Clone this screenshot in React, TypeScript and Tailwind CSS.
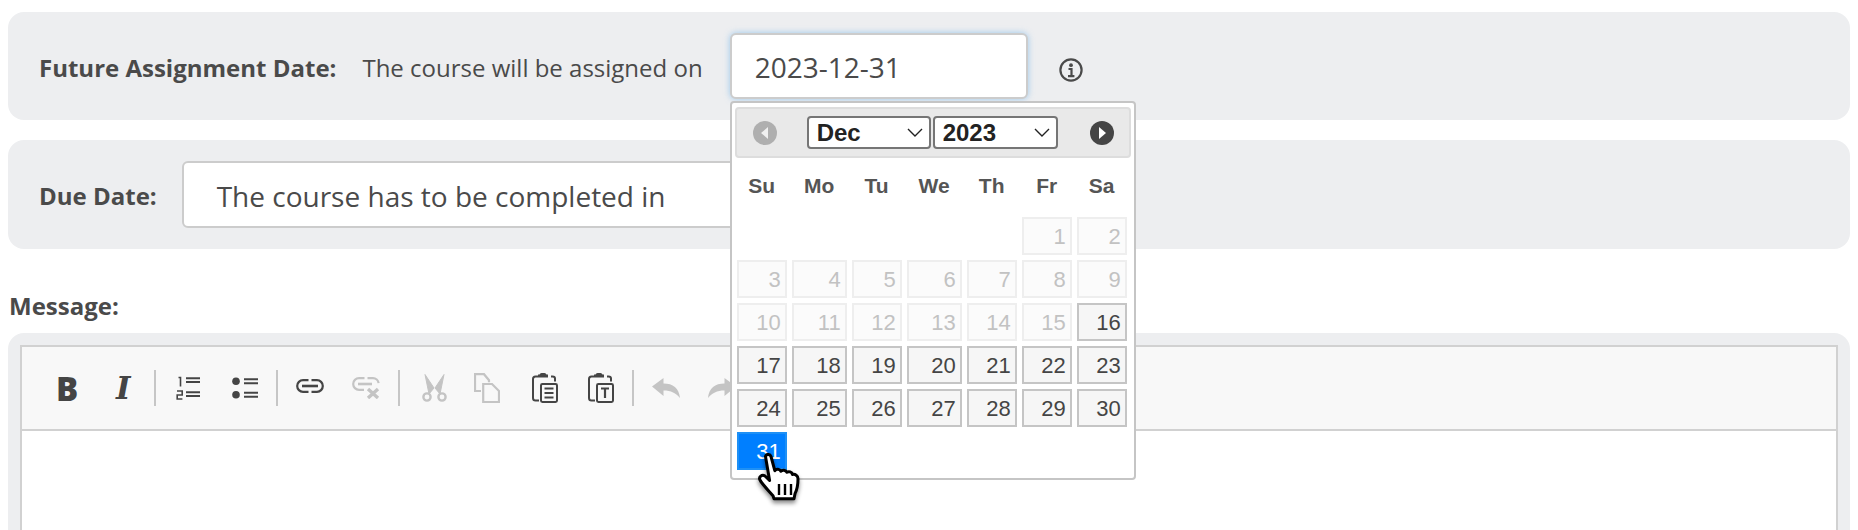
import React from "react";

const ACTIVE = "#454545";
const MUTED = "#c4c4c4";

const WEEKDAYS = ["Su", "Mo", "Tu", "We", "Th", "Fr", "Sa"];
const DAYS: (number | null)[] = [
  null, null, null, null, null,
  ...Array.from({ length: 31 }, (_, i) => i + 1),
];

const Separator = ({ ml }: { ml: string }) => (
  <div className={`h-[36px] w-[2px] bg-[#c6c6c6] ${ml}`} />
);

const NumberedIcon = () => (
  <svg width="24" height="24" viewBox="0 0 24 24" className="ml-[20px]" fill="none" stroke={ACTIVE}>
    <path d="M2.5 1.500h2v9" strokeWidth="1.6" />
    <path d="M10 2.200h14M10 6h14M10 16.200h14M10 20h14" strokeWidth="2" />
    <path d="M1 15h5.200v4H1.200v4H6.400" strokeWidth="1.6" />
  </svg>
);

const BulletIcon = () => (
  <svg width="26" height="22" viewBox="0 0 26 22" className="ml-[32px]" fill={ACTIVE} stroke={ACTIVE}>
    <circle cx="4" cy="4.200" r="3.800" stroke="none" />
    <circle cx="4" cy="17.800" r="3.800" stroke="none" />
    <path d="M12 2.200h14M12 6.200h14M12 15.800h14M12 19.800h14" strokeWidth="2" fill="none" />
  </svg>
);

const LinkIcon = () => (
  <svg width="28" height="14" viewBox="0 0 28 14" className="ml-[18px] -mt-[4px]" fill="none" stroke={ACTIVE} strokeWidth="2.200">
    <path d="M12.500 1.200H7a5.800 5.800 0 0 0 0 11.600h5.500" />
    <path d="M15.500 1.200H21a5.800 5.800 0 0 1 0 11.600h-5.500" />
    <path d="M6 7h16" strokeWidth="2.600" />
  </svg>
);

const UnlinkIcon = () => (
  <svg width="28" height="22" viewBox="0 0 28 22" className="ml-[28px]" fill="none" stroke={MUTED} strokeWidth="2.200">
    <path d="M12.500 1.200H7a5.800 5.800 0 0 0 0 11.600h5" />
    <path d="M15.500 1.200H21a5.800 5.800 0 0 1 5.600 5" />
    <path d="M6 7h14" strokeWidth="2.600" />
    <path d="M16 12l10 9M26 12l-10 9" strokeWidth="3.400" />
  </svg>
);

const CutIcon = () => (
  <svg width="25" height="28" viewBox="0 0 25 28" className="ml-[22px]" fill="none" stroke={MUTED}>
    <circle cx="5" cy="23" r="3.600" strokeWidth="2.400" />
    <circle cx="20" cy="23" r="3.600" strokeWidth="2.400" />
    <path d="M7 20L3 .5l9 13.500zM18 20L22 .5l-9 13.500z" fill={MUTED} strokeWidth="1" />
  </svg>
);

const CopyIcon = () => (
  <svg width="26" height="30" viewBox="0 0 26 30" className="ml-[27px]" fill="none" stroke={MUTED} strokeWidth="2.200">
    <path d="M7 18H1V1.200h9l5 6v2" />
    <path d="M9.200 11h8.800l7 7v11H9.200z" />
  </svg>
);

const PasteIcon = ({ text, ml }: { text?: boolean; ml: string }) => (
  <svg width="26" height="30" viewBox="0 0 26 30" className={ml} fill="none" stroke={ACTIVE} strokeWidth="2">
    <path d="M6 3.500H3.500Q1 3.500 1 6v19q0 2.500 2.500 2.500H7" />
    <path d="M19 3.500h1.500Q23 3.500 23 5.500v3" />
    <path d="M7.500 1.500Q8 0 9.500 0h3q1.500 0 2 1.500H16v3H6v-3z" fill={ACTIVE} stroke="none" />
    <rect x="9" y="11" width="16" height="18" rx="1.400" />
    {text ? (
      <path d="M13 15.500h8M17 15.500v9.500" strokeWidth="2.200" />
    ) : (
      <path d="M12.500 15.500h9M12.500 20h9M12.500 24.500h9" strokeWidth="2" />
    )}
  </svg>
);

const UndoIcon = ({ ml, flip }: { ml: string; flip?: boolean }) => (
  <svg width="28" height="20" viewBox="0 0 28 20" className={`${ml} ${flip ? "-scale-x-100" : ""}`} fill={MUTED}>
    <path d="M0 8.500L11.500 0v5.500C21 5.500 27 10 28 20 24 15 19 12.500 11.500 12.500V18z" />
  </svg>
);

const InfoIcon = () => (
  <svg width="24" height="24" viewBox="0 0 24 24" className="ml-[31px] mt-[8px]" fill="none" stroke="#4a4a4a">
    <circle cx="12" cy="12" r="10.600" strokeWidth="2.200" />
    <circle cx="12" cy="7.200" r="1.900" fill="#4a4a4a" stroke="none" />
    <path d="M9.500 11h3v7M9 18.200h6.400" strokeWidth="2.200" />
  </svg>
);

const NavButton = ({ next }: { next?: boolean }) => (
  <svg width="26" height="26" viewBox="0 0 26 26" className={next ? "" : "opacity-35"}>
    <circle cx="13" cy="13" r="12" fill="#454545" />
    {next ? <path d="M10 7l7 6-7 6z" fill="#fff" /> : <path d="M16 7l-7 6 7 6z" fill="#fff" />}
  </svg>
);

const HandCursor = () => (
  <svg
    width="46"
    height="50"
    viewBox="0 0 46 50"
    className="absolute left-[26px] top-[350px] drop-shadow-[0_3px_2px_rgba(0,0,0,0.45)]"
  >
    <path
      d="M7.500 3.500C8 .8 12 .8 13 3.500l3.800 14.200c1.500-2.200 5-2 6 .6 1.500-1.800 5-1.500 6 1 2-1.200 5-.5 5.700 2.200 2.600-.6 5.500 1 5.500 4.200 0 6-1 11-3 15l-1 5H16l-1-3C10 37 4 31 2 27c-1.600-3 2-6 5-4l4.600 4.500z"
      fill="#fff"
      stroke="#000"
      strokeWidth="3"
      strokeLinejoin="round"
    />
    <path d="M21 31v11M27 31v11M33 31v11" stroke="#000" strokeWidth="2.400" />
  </svg>
);

const DayCell = ({ day }: { day: number }) => {
  const selected = day === 31;
  const disabled = day < 16;
  return (
    <div
      className={`flex items-center justify-end pr-[4px] h-[38px] border-2 text-[22px] ${
        selected
          ? "border-[#1e90f5] bg-[#007fff] text-white"
          : disabled
            ? "border-[#eeeeee] bg-[#fbfbfb] text-[#c2c2c2]"
            : "border-[#c5c5c5] bg-[#f6f6f6] text-[#454545]"
      }`}
    >
      {day}
    </div>
  );
};

const MonthSelect = ({ value, className }: { value: string; className: string }) => (
  <div className={`relative h-[33px] ${className}`}>
    <select
      defaultValue={value}
      className="w-full h-full appearance-none bg-white border-2 border-[#767676] rounded-[4px] pl-[8px] text-[24px] leading-none font-bold text-[#222222] outline-none"
    >
      <option>{value}</option>
    </select>
    <svg width="16" height="9" viewBox="0 0 16 9" className="absolute right-[8px] top-[12px]" fill="none" stroke="#222" strokeWidth="1.400">
      <path d="M1 1l7 7 7-7" />
    </svg>
  </div>
);

const DatePicker = () => (
  <div className="absolute left-0 top-[68px] z-10 w-[406px] h-[379px] bg-white border-2 border-[#c5c5c5] rounded-[4px] px-[3px] pt-[4px] font-['Liberation_Sans',sans-serif]">
    <div className="relative flex items-center justify-between h-[51px] pl-[15px] pr-[14px] bg-[#e9e9e9] border-2 border-[#dddddd] rounded-[4px]">
      <NavButton />
      <div className="absolute left-[70px] top-[7px] flex gap-[2px]">
        <MonthSelect value="Dec" className="w-[124px]" />
        <MonthSelect value="2023" className="w-[125px]" />
      </div>
      <NavButton next />
    </div>
    <div className="ml-[2px] w-[390px] grid grid-cols-[50px_55px_50px_55px_50px_50px_50px] gap-x-[5px]">
      {WEEKDAYS.map((d) => (
        <div key={d} className="h-[59px] pb-[4px] flex items-center justify-center text-[21px] font-bold text-[#555555]">
          {d}
        </div>
      ))}
    </div>
    <div className="ml-[2px] w-[390px] grid grid-cols-[50px_55px_50px_55px_50px_50px_50px] gap-x-[5px] gap-y-[5px]">
      {DAYS.map((day, i) => (day === null ? <div key={i} /> : <DayCell key={i} day={day} />))}
    </div>
    <HandCursor />
  </div>
);

export default function App() {
  return (
    <div className="h-[530px] w-[1858px] overflow-hidden bg-white px-[8px] pt-[12px] font-['Open_Sans',sans-serif] text-[#4a4a4a]">
      <div className="flex items-center h-[108px] w-[1842px] rounded-[16px] bg-[#edeef0] pl-[31px]">
        <span className="font-bold text-[24px] pt-[3px]">Future Assignment Date:</span>
        <span className="ml-[26px] text-[24px] pt-[3px]">The course will be assigned on</span>
        <div className="relative ml-[27px]">
          <div className="flex items-center w-[298px] h-[66px] bg-white border-2 border-[#cccccc] rounded-[6px] pl-[23px] pt-[2px] text-[28px] shadow-[0_0_6px_rgba(102,175,233,0.6)]">
            2023-12-31
          </div>
          <DatePicker />
        </div>
        <InfoIcon />
      </div>

      <div className="flex items-center h-[109px] w-[1842px] mt-[20px] rounded-[16px] bg-[#edeef0] pl-[31px]">
        <span className="font-bold text-[24px] pt-[3px]">Due Date:</span>
        <div className="flex items-center ml-[25px] w-[640px] h-[67px] bg-white border-2 border-[#cccccc] rounded-[6px] pl-[33px] pt-[2px] text-[28px]">
          The course has to be completed in
        </div>
      </div>

      <div className="mt-[43px] ml-[1px] font-bold text-[24px] leading-[28px]">Message:</div>

      <div className="mt-[13px] w-[1842px] h-[300px] rounded-[16px] bg-[#edeef0] px-[12px] pt-[12px]">
        <div className="h-full border-2 border-[#d1d1d1] bg-white">
          <div className="flex items-center h-[84px] pl-[34px] border-b-2 border-[#d1d1d1] bg-[#f8f8f8]">
            <span className="w-[21px] text-[33px] leading-none font-extrabold text-[#454545]">B</span>
            <span className="ml-[39px] w-[16px] text-[31px] leading-none font-bold italic font-['DejaVu_Serif',serif] text-[#454545]">I</span>
            <Separator ml="ml-[22px]" />
            <NumberedIcon />
            <BulletIcon />
            <Separator ml="ml-[18px]" />
            <LinkIcon />
            <UnlinkIcon />
            <Separator ml="ml-[18px]" />
            <CutIcon />
            <CopyIcon />
            <PasteIcon ml="ml-[32px]" />
            <PasteIcon text ml="ml-[30px]" />
            <Separator ml="ml-[18px]" />
            <UndoIcon ml="ml-[18px]" />
            <UndoIcon ml="ml-[28px]" flip />
          </div>
        </div>
      </div>
    </div>
  );
}
